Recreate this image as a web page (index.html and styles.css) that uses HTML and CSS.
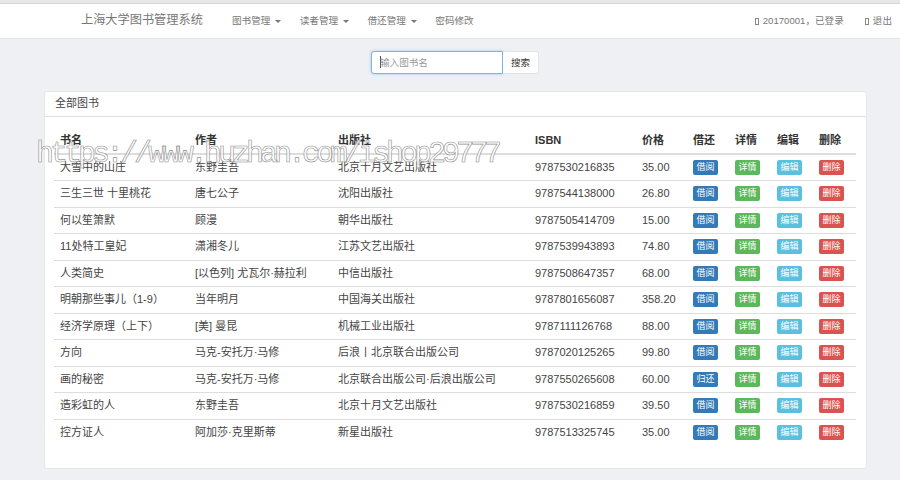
FILE: index.html
```html
<!DOCTYPE html>
<html lang="zh-CN">
<head>
<meta charset="utf-8">
<title>上海大学图书管理系统</title>
<link rel="stylesheet" href="styles.css">
</head>
<body>
<div class="topstrip"></div>
<nav class="navbar">
  <a class="brand">上海大学图书管理系统</a>
  <ul class="menu">
    <li>图书管理<span class="caret"></span></li>
    <li>读者管理<span class="caret"></span></li>
    <li>借还管理<span class="caret"></span></li>
    <li>密码修改</li>
  </ul>
  <ul class="user">
    <li><span class="tofu"></span>20170001，已登录</li>
    <li><span class="tofu"></span>退出</li>
  </ul>
</nav>
<form class="search">
  <div class="search-input"><span class="cursor"></span>输入图书名</div>
  <div class="search-btn">搜索</div>
</form>
<section class="panel">
  <div class="panel-head">全部图书</div>
  <div class="panel-body">
    <table class="books">
      <colgroup>
        <col class="c1"><col class="c2"><col class="c3"><col class="c4"><col class="c5">
        <col class="c6"><col class="c6"><col class="c6"><col class="c7">
      </colgroup>
      <thead>
        <tr><th>书名</th><th>作者</th><th>出版社</th><th>ISBN</th><th>价格</th><th>借还</th><th>详情</th><th>编辑</th><th>删除</th></tr>
      </thead>
      <tbody>
        <tr><td>大雪中的山庄</td><td>东野圭吾</td><td>北京十月文艺出版社</td><td>9787530216835</td><td>35.00</td><td><span class="btn blue">借阅</span></td><td><span class="btn green">详情</span></td><td><span class="btn cyan">编辑</span></td><td><span class="btn red">删除</span></td></tr>
        <tr><td>三生三世 十里桃花</td><td>唐七公子</td><td>沈阳出版社</td><td>9787544138000</td><td>26.80</td><td><span class="btn blue">借阅</span></td><td><span class="btn green">详情</span></td><td><span class="btn cyan">编辑</span></td><td><span class="btn red">删除</span></td></tr>
        <tr><td>何以笙箫默</td><td>顾漫</td><td>朝华出版社</td><td>9787505414709</td><td>15.00</td><td><span class="btn blue">借阅</span></td><td><span class="btn green">详情</span></td><td><span class="btn cyan">编辑</span></td><td><span class="btn red">删除</span></td></tr>
        <tr><td>11处特工皇妃</td><td>潇湘冬儿</td><td>江苏文艺出版社</td><td>9787539943893</td><td>74.80</td><td><span class="btn blue">借阅</span></td><td><span class="btn green">详情</span></td><td><span class="btn cyan">编辑</span></td><td><span class="btn red">删除</span></td></tr>
        <tr><td>人类简史</td><td>[以色列] 尤瓦尔·赫拉利</td><td>中信出版社</td><td>9787508647357</td><td>68.00</td><td><span class="btn blue">借阅</span></td><td><span class="btn green">详情</span></td><td><span class="btn cyan">编辑</span></td><td><span class="btn red">删除</span></td></tr>
        <tr><td>明朝那些事儿（1-9）</td><td>当年明月</td><td>中国海关出版社</td><td>9787801656087</td><td>358.20</td><td><span class="btn blue">借阅</span></td><td><span class="btn green">详情</span></td><td><span class="btn cyan">编辑</span></td><td><span class="btn red">删除</span></td></tr>
        <tr><td>经济学原理（上下）</td><td>[美] 曼昆</td><td>机械工业出版社</td><td>9787111126768</td><td>88.00</td><td><span class="btn blue">借阅</span></td><td><span class="btn green">详情</span></td><td><span class="btn cyan">编辑</span></td><td><span class="btn red">删除</span></td></tr>
        <tr><td>方向</td><td>马克-安托万·马修</td><td>后浪丨北京联合出版公司</td><td>9787020125265</td><td>99.80</td><td><span class="btn blue">借阅</span></td><td><span class="btn green">详情</span></td><td><span class="btn cyan">编辑</span></td><td><span class="btn red">删除</span></td></tr>
        <tr><td>画的秘密</td><td>马克-安托万·马修</td><td>北京联合出版公司·后浪出版公司</td><td>9787550265608</td><td>60.00</td><td><span class="btn blue">归还</span></td><td><span class="btn green">详情</span></td><td><span class="btn cyan">编辑</span></td><td><span class="btn red">删除</span></td></tr>
        <tr><td>造彩虹的人</td><td>东野圭吾</td><td>北京十月文艺出版社</td><td>9787530216859</td><td>39.50</td><td><span class="btn blue">借阅</span></td><td><span class="btn green">详情</span></td><td><span class="btn cyan">编辑</span></td><td><span class="btn red">删除</span></td></tr>
        <tr><td>控方证人</td><td>阿加莎·克里斯蒂</td><td>新星出版社</td><td>9787513325745</td><td>35.00</td><td><span class="btn blue">借阅</span></td><td><span class="btn green">详情</span></td><td><span class="btn cyan">编辑</span></td><td><span class="btn red">删除</span></td></tr>
      </tbody>
    </table>
  </div>
</section>
<div class="watermark">https://www.huzhan.com/ishop29777</div>
</body>
</html>
```
FILE: styles.css
```css
* { box-sizing: border-box; }
html, body { height: 100%; }
body {
  margin: 0;
  height: 480px;
  overflow: hidden;
  position: relative;
  background: #eef0f4;
  color: #333;
  font: 11px/1.4 "Liberation Sans", "Noto Sans CJK SC", sans-serif;
}
.topstrip { height: 4px; background: #e7e7e7; border-bottom: 1px solid #d8d8d8; }
.navbar {
  height: 35px;
  background: #fff;
  border-bottom: 1px solid #e4e5e7;
  display: flex;
  align-items: center;
  padding: 0 8px 0 81px;
  color: #777;
}
.brand { font-size: 12.2px; width: 151px; color: #777; }
.menu, .user { list-style: none; margin: 0; padding: 0; display: flex; font-size: 9.6px; }
.menu { gap: 18.4px; }
.menu li { white-space: nowrap; }
.caret {
  display: inline-block;
  margin-left: 5px;
  vertical-align: middle;
  border-top: 3px solid #777;
  border-left: 3px solid transparent;
  border-right: 3px solid transparent;
}
.user { margin-left: auto; gap: 21px; font-size: 9.6px; }
.tofu {
  display: inline-block;
  width: 4px;
  height: 7px;
  border: 1px solid #888;
  margin-right: 4px;
  vertical-align: -1px;
}
.search { display: flex; justify-content: center; padding-top: 12px; height: 52px; margin-left: 10px; }
.search-input {
  width: 132px;
  height: 23px;
  background: #fff;
  border: 1px solid #7fb4e0;
  border-radius: 3px 0 0 3px;
  box-shadow: 0 0 3px rgba(102, 175, 233, .6);
  padding: 0 0 0 8px;
  font-size: 9.6px;
  line-height: 21px;
  color: #999;
}
.cursor { display: inline-block; width: 1px; height: 12px; background: #555; vertical-align: -2px; margin-right: -1px; }
.search-btn {
  width: 36px;
  height: 23px;
  background: #fff;
  border: 1px solid #e2e3e5;
  border-left: 0;
  border-radius: 0 3px 3px 0;
  font-size: 9.6px;
  line-height: 21px;
  text-align: center;
  color: #333;
}
.panel {
  margin-left: 44px;
  width: 823px;
  height: 378px;
  background: #fff;
  border-radius: 3px;
  border: 1px solid #e6e7e9;
}
.panel-head {
  height: 25px;
  padding: 0 10px;
  line-height: 23px;
  border-bottom: 1px solid #dfe0e2;
  color: #444;
}
.panel-body { padding: 10px 10px 0 9px; }
.books { border-collapse: collapse; table-layout: fixed; width: 802px; }
.c1 { width: 135px; }
.c2 { width: 143px; }
.c3 { width: 197px; }
.c4 { width: 107px; }
.c5 { width: 51px; }
.c6 { width: 42px; }
.c7 { width: 43px; }
th, td { padding: 0 6px; text-align: left; white-space: nowrap; }
th { height: 27px; font-weight: 700; color: #333; border-bottom: 2px solid #ddd; vertical-align: bottom; padding-bottom: 5px; }
td { height: 26.5px; color: #444; border-top: 1px solid #ddd; vertical-align: middle; }
tbody tr:first-child td { border-top: 0; }
.btn {
  display: block;
  width: 25px;
  height: 15px;
  border-radius: 2px;
  color: #fff;
  font-size: 9px;
  line-height: 15px;
  text-align: center;
}
.blue { background: #337ab7; }
.green { background: #5cb85c; }
.cyan { background: #5bc0de; }
.red { background: #d9534f; }
.watermark {
  position: absolute;
  left: 36px;
  top: 139px;
  font: 400 30px/30px "Liberation Mono", monospace;
  letter-spacing: -4px;
  color: rgba(255, 255, 255, .85);
  -webkit-text-stroke: 0.6px #8f8f8f;
  white-space: nowrap;
  pointer-events: none;
}
```
